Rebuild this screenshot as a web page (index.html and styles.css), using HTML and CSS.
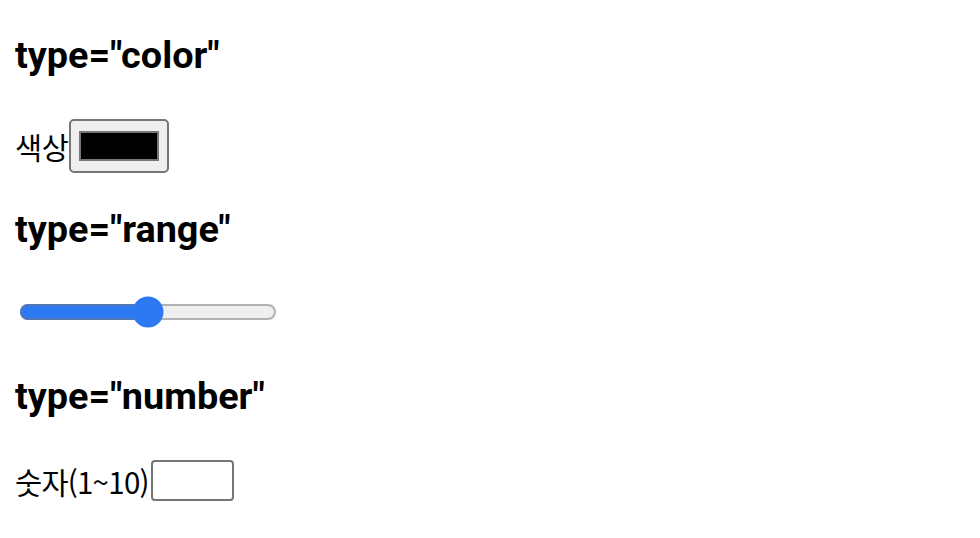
FILE: index.html
```html
<!DOCTYPE html>
<html lang="ko">
<head>
<meta charset="utf-8">
<title>input types</title>
<link rel="stylesheet" href="styles.css">
</head>
<body class="doc">
<h3 class="title title-first">type="color"</h3>
<label class="field field-color"><span class="label-text">색상</span><input class="color" type="color" value="#000000"></label>
<h3 class="title title-range">type="range"</h3>
<div class="range-row"><input class="range" type="range" min="0" max="100" value="50"></div>
<h3 class="title title-number">type="number"</h3>
<label class="field field-number"><span class="label-text label-tight">숫자(1~10)</span><input class="number" type="number" min="1" max="10"></label>
</body>
</html>
```
FILE: styles.css
```css
html, body {
  margin: 0;
  padding: 0;
  background: #fff;
}
.doc {
  padding: 0 15px;
  display: flex;
  flex-direction: column;
  align-items: flex-start;
  font-family: Roboto, "Noto Sans CJK KR", sans-serif;
  color: #000;
}
.title {
  font-family: Roboto, "Noto Sans CJK KR", sans-serif;
  font-size: 37.8px;
  line-height: 44px;
  font-weight: bold;
  margin: 0;
}
.title-first { margin-top: 33px; }
.title-range { margin-top: 34px; }
.title-number { margin-top: 42px; }

.field {
  display: flex;
  align-items: center;
  font-family: "Noto Sans CJK KR", sans-serif;
  font-size: 29.5px;
  line-height: 40px;
}
.field-color { margin-top: 42px; }
.field-number { margin-top: 42px; }
.label-text {
  letter-spacing: -0.3px;
}
.label-tight {
  letter-spacing: -0.75px;
}
.color {
  zoom: 2;
  margin: 0;
}
.range-row {
  margin-top: 41px;
  display: flex;
}
.range {
  zoom: 2;
  margin: 2px;
  accent-color: #2c79f3;
}
.number {
  box-sizing: border-box;
  width: 83px;
  height: 41px;
  margin: 0 0 0 2px;
  padding: 0 4px;
  border: 2px solid #767676;
  border-radius: 4px;
  background: #fff;
  font-size: 26px;
}
```
